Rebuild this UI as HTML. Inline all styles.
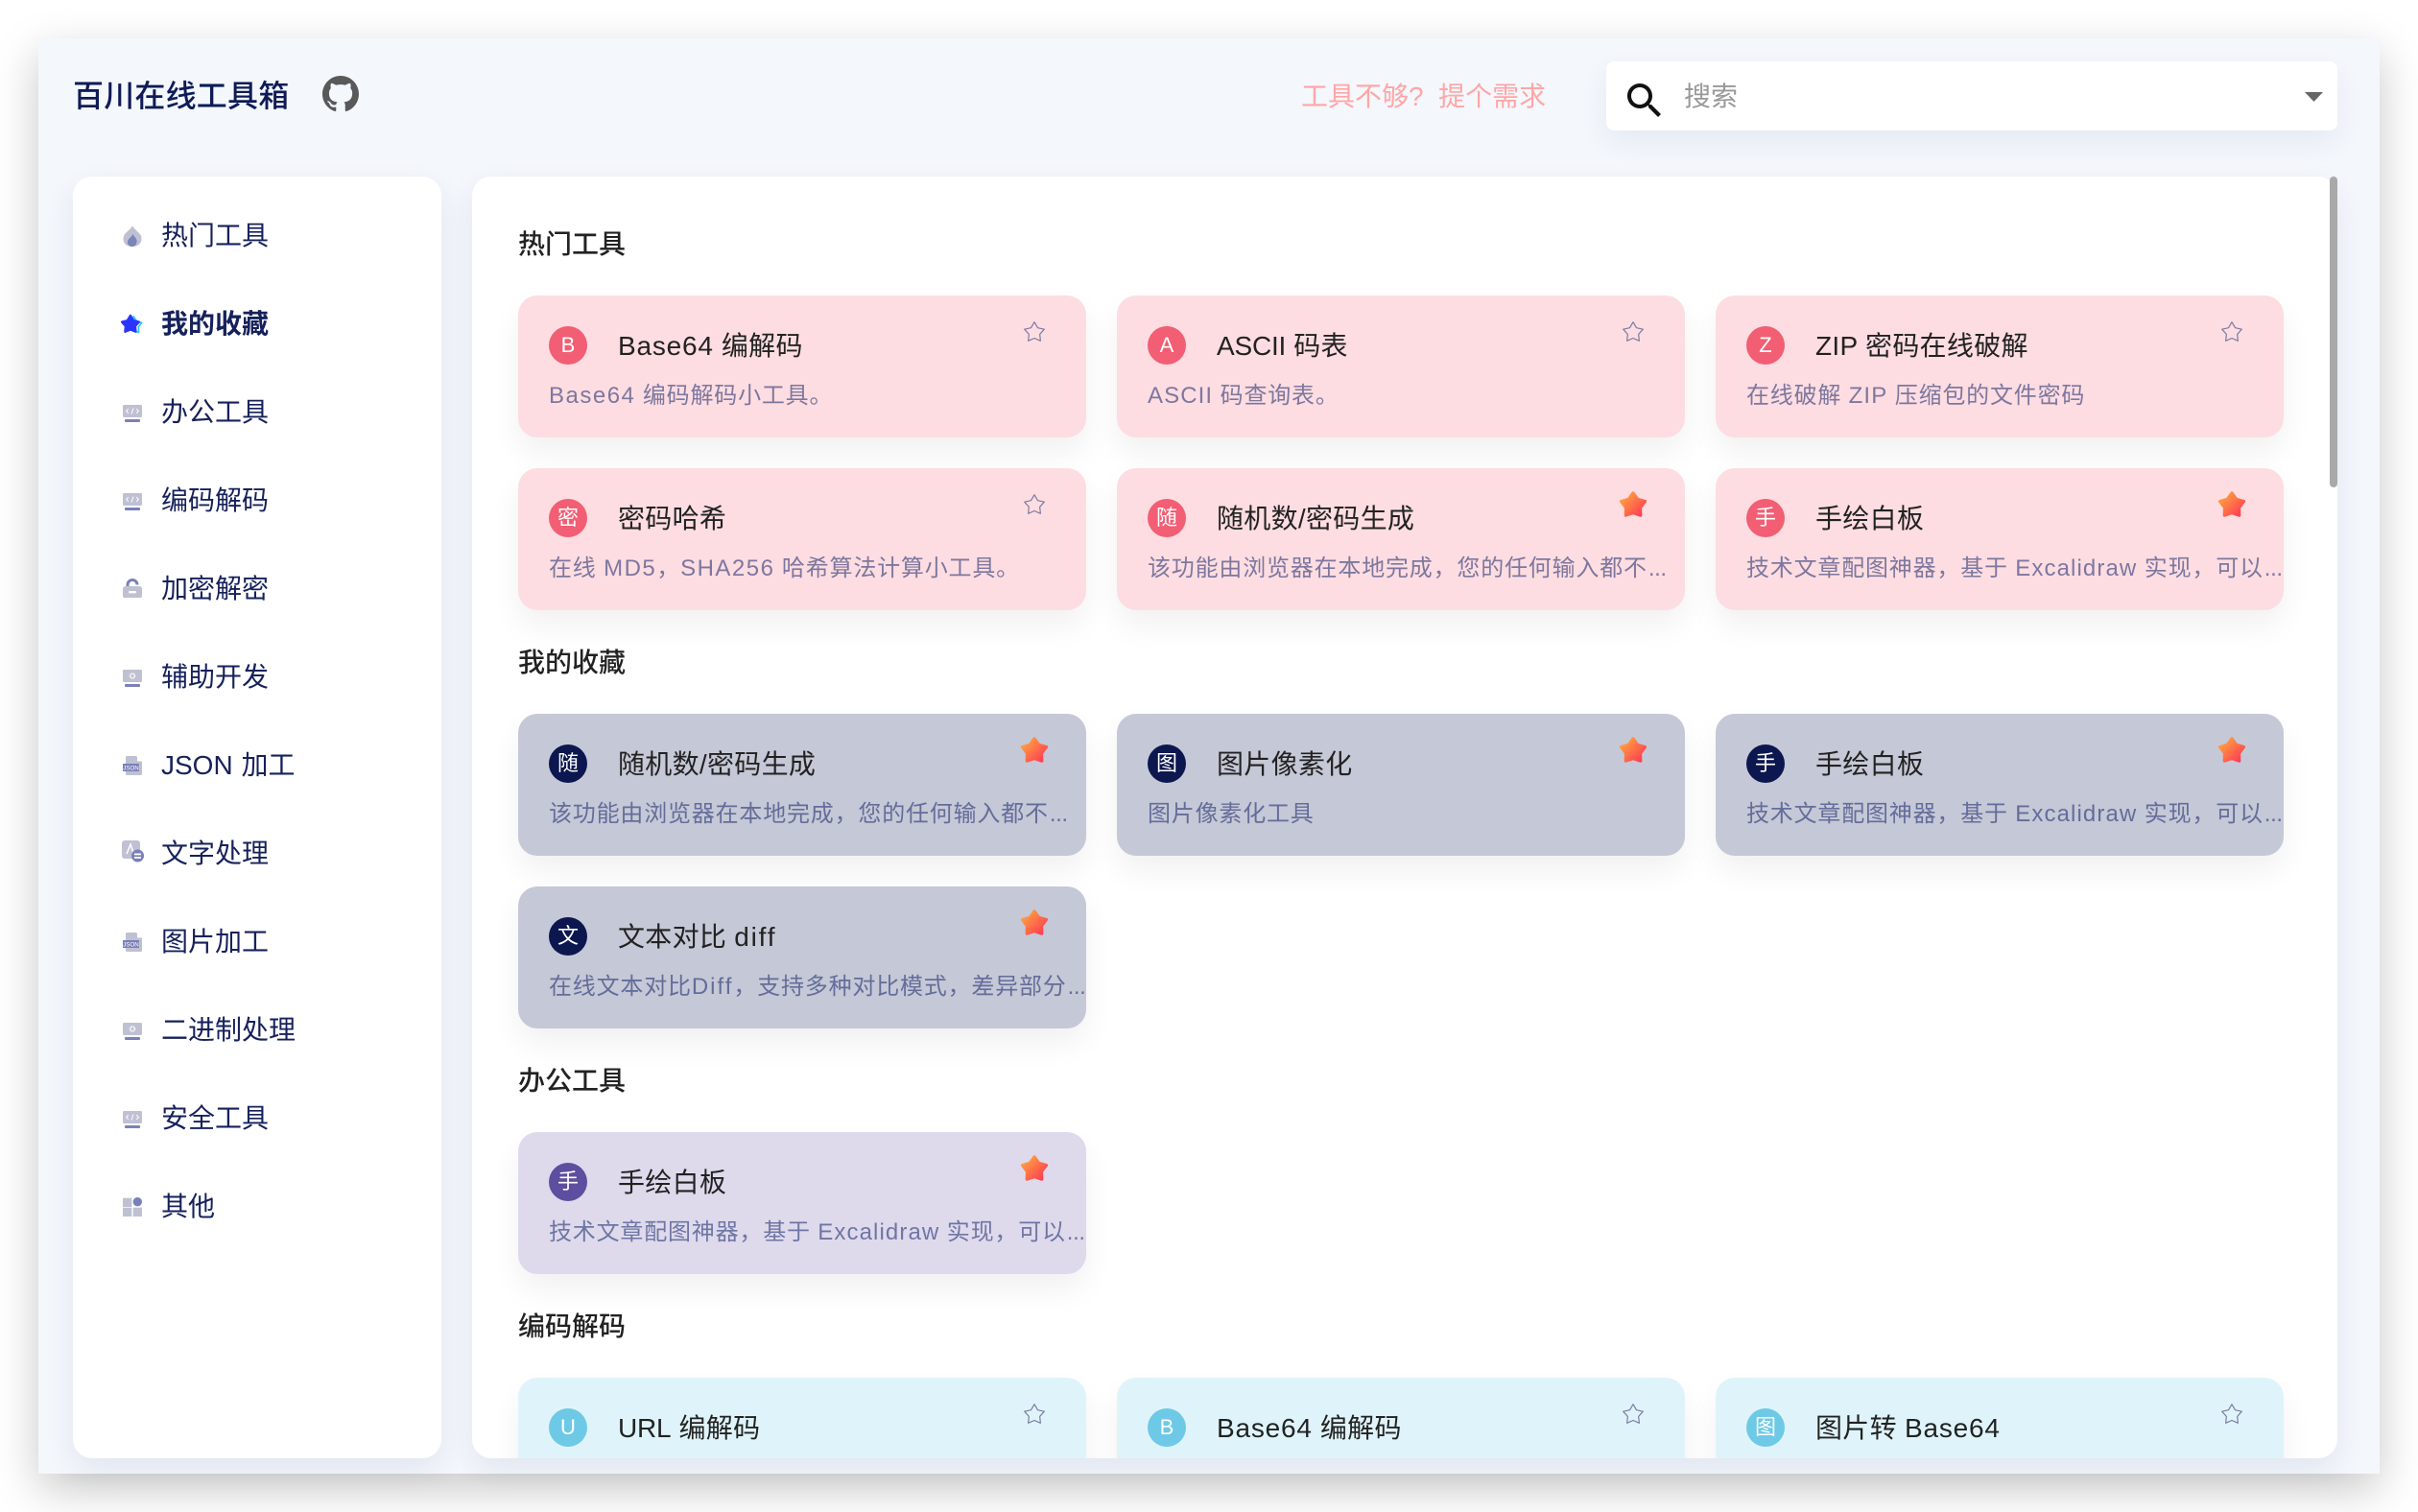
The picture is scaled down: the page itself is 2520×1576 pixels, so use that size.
<!DOCTYPE html>
<html lang="zh"><head><meta charset="utf-8"><title>百川在线工具箱</title>
<style>
*{box-sizing:border-box}
html,body{margin:0;padding:0;width:2520px;height:1576px;overflow:hidden;background:#fff;font-family:"Liberation Sans","Noto Sans CJK SC",sans-serif}
#win{position:absolute;left:40px;top:40px;width:2440px;height:1496px;background:#f4f7fc;box-shadow:0 16px 44px rgba(0,0,0,.22)}
.abs,.n,.i,.st,.h,.c{position:absolute}
#side{position:absolute;left:76px;top:184px;width:384px;height:1336px;background:#fff;border-radius:20px;box-shadow:0 12px 30px rgba(40,60,110,.09)}
#main{position:absolute;left:492px;top:184px;width:1944px;height:1336px;background:#fff;border-radius:20px;box-shadow:0 12px 30px rgba(40,60,110,.09)}
#clip{position:absolute;left:0;top:0;width:1944px;height:1336px;overflow:hidden;border-radius:20px}
.n{left:168px;height:40px;line-height:40px;font-size:28px;color:#16215b;white-space:nowrap;margin-top:-1px}
.i{left:128px;width:20px;height:20px}
.h{left:48px;height:40px;line-height:40px;font-size:28px;font-weight:500;color:#222;white-space:nowrap}
.c{width:592px;height:148px;border-radius:20px;box-shadow:0 16px 32px rgba(0,0,0,.06)}
.a{position:absolute;left:32px;top:32px;width:40px;height:40px;border-radius:50%;color:#fff;font-size:22px;line-height:40px;text-align:center}
.t{position:absolute;left:104px;top:33px;height:40px;line-height:40px;font-size:28px;color:#222;white-space:nowrap;letter-spacing:.3px}
.d{position:absolute;left:32px;top:85px;width:560px;height:40px;line-height:40px;font-size:24px;letter-spacing:.8px;color:rgba(20,35,105,.55);white-space:nowrap;overflow:hidden}
.d i{font-style:normal;letter-spacing:-.4px;margin-left:1px}
.st{left:525px;top:25px;width:26px;height:26px}
.f{left:521px;top:21px;width:34px;height:34px}
.p{background:#fddde1}.p .a{background:#f25e73}
.g{background:#c5c8d6}.g .a{background:#0c174f}
.v{background:#dedaec}.v .a{background:#5d4e9f}
.b{background:#dff4fa}.b .a{background:#6ec9e6}
.l1{letter-spacing:1.5px}.l2{letter-spacing:1.1px}.l3{letter-spacing:2px}.l4{letter-spacing:.8px}.l5{letter-spacing:1.8px}.l6{letter-spacing:-.2px}
</style></head><body>
<svg width="0" height="0" style="position:absolute"><defs>
<linearGradient id="gr" gradientUnits="userSpaceOnUse" x1="4" y1="5" x2="20" y2="21"><stop offset="0" stop-color="#ffa53f"/><stop offset="1" stop-color="#ff3355"/></linearGradient>
<symbol id="so" viewBox="0 0 24 24"><polygon points="12,2.5 15.23,8.05 21.51,9.41 17.23,14.2 17.88,20.59 12,18 6.12,20.59 6.77,14.2 2.49,9.41 8.77,8.05" fill="none" stroke="#7c7ba3" stroke-width="1.1" stroke-linejoin="round"/></symbol>
<symbol id="sf" viewBox="0 0 24 24"><polygon points="12,3.5 15.23,8.05 20.7,9.6 17.23,14.2 17.4,19.8 12,18 6.6,19.8 6.77,14.2 3.3,9.6 8.77,8.05" fill="url(#gr)" stroke="url(#gr)" stroke-width="2.4" stroke-linejoin="round"/></symbol>
<symbol id="code" viewBox="0 0 20 20"><rect x="0" y="2" width="20" height="13" rx="1.5" fill="#bfc1d3"/><rect x="2" y="17" width="16" height="3" rx="1" fill="#7a80b8"/><path d="M5.8 6.2L3.6 8.5l2.2 2.3M14.2 6.2l2.2 2.3-2.2 2.3M11 5.5L9 11.5" fill="none" stroke="#fff" stroke-width="1"/></symbol>
<symbol id="gear" viewBox="0 0 20 20"><rect x="0" y="2" width="20" height="13" rx="1.5" fill="#bfc1d3"/><rect x="2" y="17" width="16" height="3" rx="1" fill="#7a80b8"/><circle cx="10" cy="8.5" r="2.4" fill="none" stroke="#fff" stroke-width="1.6" stroke-dasharray="1.2 .5"/></symbol>
<symbol id="json" viewBox="0 0 20 20"><path d="M3 1.5Q3 0 4.5 0H14l6 6v12.5q0 1.5-1.5 1.5h-14Q3 20 3 18.5z" fill="#bfc1d3"/><path d="M15 0l5 5.5h-5z" fill="#fff"/><rect x="0" y="8" width="17" height="8" fill="#7a80b8"/><text x="8.5" y="14.5" font-size="6.2" fill="#fff" text-anchor="middle" font-family="Liberation Sans">JSON</text></symbol>
</defs></svg>
<div id="win"></div>

<div class="abs" style="left:76px;top:80px;height:40px;line-height:40px;font-size:32px;font-weight:500;color:#0f1b56;white-space:nowrap;letter-spacing:.2px">百川在线工具箱</div>
<svg class="abs" style="left:335.500px;top:79px" width="38" height="38" viewBox="0 0 16 16"><path fill="#595959" d="M8 0C3.58 0 0 3.58 0 8c0 3.54 2.29 6.53 5.47 7.59.4.07.55-.17.55-.38 0-.19-.01-.82-.01-1.49-2.01.37-2.53-.49-2.69-.94-.09-.23-.48-.94-.82-1.13-.28-.15-.68-.52-.01-.53.63-.01 1.08.58 1.23.82.72 1.21 1.87.87 2.33.66.07-.52.28-.87.51-1.07-1.78-.2-3.64-.89-3.64-3.95 0-.87.31-1.59.82-2.15-.08-.2-.36-1.02.08-2.12 0 0 .67-.21 2.2.82.64-.18 1.32-.27 2-.27.68 0 1.36.09 2 .27 1.53-1.04 2.2-.82 2.2-.82.44 1.1.16 1.92.08 2.12.51.56.82 1.27.82 2.15 0 3.07-1.87 3.75-3.65 3.95.29.25.54.73.54 1.48 0 1.07-.01 1.93-.01 2.2 0 .21.15.46.55.38A8.013 8.013 0 0016 8c0-4.42-3.58-8-8-8z"/></svg>
<div class="abs" style="left:1356px;top:81px;height:40px;line-height:40px;font-size:28px;color:#ffa6a6;white-space:nowrap">工具不够?&nbsp;&nbsp;<span style="margin-left:0">提个需求</span></div>

<div class="abs" style="left:1674px;top:64px;width:762px;height:72px;background:#fff;border-radius:8px;box-shadow:0 12px 30px rgba(40,60,110,.07)"></div>
<svg class="abs" style="left:1690px;top:81px" width="48" height="48" viewBox="0 0 24 24"><path fill="#111" d="M15.5 14h-.79l-.28-.27C15.41 12.59 16 11.11 16 9.5 16 5.91 13.09 3 9.5 3S3 5.91 3 9.5 5.91 16 9.5 16c1.61 0 3.09-.59 4.23-1.57l.27.28v.79l5 4.99L20.49 19l-4.99-5zm-6 0C7.01 14 5 11.99 5 9.5S7.01 5 9.5 5 14 7.01 14 9.5 11.99 14 9.5 14z"/></svg>
<div class="abs" style="left:1755px;top:81px;height:40px;line-height:40px;font-size:28px;color:#999;white-space:nowrap">搜索</div>
<svg class="abs" style="left:2401px;top:95px" width="21" height="12"><polygon points="1,1 20,1 10.5,11" fill="#666"/></svg>

<div id="side"></div>
<svg class="i" style="top:235px;height:22px" viewBox="0 0 20 20" preserveAspectRatio="none"><path d="M10 0c1 3 6 5.5 8.5 9 2.5 4.500.5 11-8.500 11S-1 14 1.500 9C4 5.500 9 3 10 0z" fill="#bfc1d3"/><path d="M10.500 8c.3 2 5 4.500 4 8-.5 2.500-2.500 4-5 4s-5-2-4.500-5c.5-2.500 4.500-4 5.500-7z" fill="#7a85bb"/></svg>
<div class="n" style="top:227px">热门工具</div>
<svg class="i" style="top:325px;left:124px;width:26px;height:26px" viewBox="0 0 24 24"><polygon points="14,4.500 17,9 21.800,10.500 18.800,14.500 19,19.800 14.500,18.500" fill="none" stroke="#33c6ff" stroke-width="1.600" stroke-linejoin="round"/><polygon points="11,3.800 13.800,8.500 19,9.800 15.500,13.800 16,19 11,17 6,19 6.500,13.800 3,9.800 8.200,8.500" fill="#2b35ff" stroke="#2b35ff" stroke-width="2.400" stroke-linejoin="round"/></svg>
<div class="n" style="top:319px;font-weight:700">我的收藏</div>
<svg class="i" style="top:420px"><use href="#code"/></svg><div class="n" style="top:411px">办公工具</div>
<svg class="i" style="top:512px"><use href="#code"/></svg><div class="n" style="top:503px">编码解码</div>
<svg class="i" style="top:603px" viewBox="0 0 20 20"><path d="M3.500 8V6.500a6.500 6.500 0 0 1 13 0H13.500a3.500 3.500 0 0 0-7 0V8z" fill="#7a80b8"/><rect y="8" width="20" height="13" rx="3" fill="#bfc1d3"/><rect x="6" y="13" width="8" height="2.400" rx="1" fill="#fff"/></svg>
<div class="n" style="top:595px">加密解密</div>
<svg class="i" style="top:696px"><use href="#gear"/></svg><div class="n" style="top:687px">辅助开发</div>
<svg class="i" style="top:788px"><use href="#json"/></svg><div class="n" style="top:779px">JSON<span style="margin-left:1px"> </span>加工</div>
<svg class="i" style="top:876px;left:127px;width:23px;height:23px" viewBox="0 0 23 23"><rect y="0" width="19" height="19" rx="3" fill="#bfc1d3"/><path d="M5 14L9 4l3 9" fill="none" stroke="#fff" stroke-width="1.500"/><circle cx="16.500" cy="16" r="6.500" fill="#7a80b8"/><rect x="13" y="13.500" width="7" height="1.800" fill="#fff"/><rect x="13" y="17" width="7" height="1.800" fill="#fff"/></svg>
<div class="n" style="top:871px">文字处理</div>
<svg class="i" style="top:972px"><use href="#json"/></svg><div class="n" style="top:963px">图片加工</div>
<svg class="i" style="top:1064px"><use href="#gear"/></svg><div class="n" style="top:1055px">二进制处理</div>
<svg class="i" style="top:1156px"><use href="#code"/></svg><div class="n" style="top:1147px">安全工具</div>
<svg class="i" style="top:1248px" viewBox="0 0 20 20"><rect width="9.300" height="9.300" y=".7" fill="#bfc1d3"/><rect y="10.700" width="9.300" height="9.300" fill="#bfc1d3"/><rect x="10.700" y="10.700" width="9.300" height="9.300" fill="#bfc1d3"/><circle cx="15.300" cy="4.700" r="4.700" fill="#7a80b8"/></svg>
<div class="n" style="top:1239px">其他</div>

<div id="main"><div id="clip">
<div class="h" style="top:51px">热门工具</div>
<div class="c p" style="left:48px;top:124px"><div class="a">B</div><div class="t"><span class="l4">Base64</span> 编解码</div><div class="d"><span class="l1">Base64</span> 编码解码小工具。</div><svg class="st"><use href="#so"/></svg></div>
<div class="c p" style="left:672px;top:124px"><div class="a">A</div><div class="t"><span class="l6">ASCII</span> 码表</div><div class="d"><span class="l2">ASCII</span> 码查询表。</div><svg class="st"><use href="#so"/></svg></div>
<div class="c p" style="left:1296px;top:124px"><div class="a">Z</div><div class="t">ZIP 密码在线破解</div><div class="d">在线破解 <span class="l2">ZIP</span> 压缩包的文件密码</div><svg class="st"><use href="#so"/></svg></div>
<div class="c p" style="left:48px;top:304px"><div class="a">密</div><div class="t">密码哈希</div><div class="d">在线 <span class="l1">MD5</span>，<span class="l1">SHA256</span> 哈希算法计算小工具。</div><svg class="st"><use href="#so"/></svg></div>
<div class="c p" style="left:672px;top:304px"><div class="a">随</div><div class="t">随机数/密码生成</div><div class="d">该功能由浏览器在本地完成，您的任何输入都不<i>...</i></div><svg class="st f"><use href="#sf"/></svg></div>
<div class="c p" style="left:1296px;top:304px"><div class="a">手</div><div class="t">手绘白板</div><div class="d">技术文章配图神器，基于 <span class="l2">Excalidraw</span> 实现，可以<i>...</i></div><svg class="st f"><use href="#sf"/></svg></div>

<div class="h" style="top:487px">我的收藏</div>
<div class="c g" style="left:48px;top:560px"><div class="a">随</div><div class="t">随机数/密码生成</div><div class="d">该功能由浏览器在本地完成，您的任何输入都不<i>...</i></div><svg class="st f"><use href="#sf"/></svg></div>
<div class="c g" style="left:672px;top:560px"><div class="a">图</div><div class="t">图片像素化</div><div class="d">图片像素化工具</div><svg class="st f"><use href="#sf"/></svg></div>
<div class="c g" style="left:1296px;top:560px"><div class="a">手</div><div class="t">手绘白板</div><div class="d">技术文章配图神器，基于 <span class="l2">Excalidraw</span> 实现，可以<i>...</i></div><svg class="st f"><use href="#sf"/></svg></div>
<div class="c g" style="left:48px;top:740px"><div class="a">文</div><div class="t">文本对比 <span class="l5">diff</span></div><div class="d">在线文本对比<span class="l3">Diff</span>，支持多种对比模式，差异部分<i>...</i></div><svg class="st f"><use href="#sf"/></svg></div>

<div class="h" style="top:923px">办公工具</div>
<div class="c v" style="left:48px;top:996px"><div class="a">手</div><div class="t">手绘白板</div><div class="d">技术文章配图神器，基于 <span class="l2">Excalidraw</span> 实现，可以<i>...</i></div><svg class="st f"><use href="#sf"/></svg></div>

<div class="h" style="top:1179px">编码解码</div>
<div class="c b" style="left:48px;top:1252px"><div class="a">U</div><div class="t"><span class="l6">URL</span> 编解码</div><div class="d">URL 编码解码小工具。</div><svg class="st"><use href="#so"/></svg></div>
<div class="c b" style="left:672px;top:1252px"><div class="a">B</div><div class="t"><span class="l4">Base64</span> 编解码</div><div class="d"><span class="l1">Base64</span> 编码解码小工具。</div><svg class="st"><use href="#so"/></svg></div>
<div class="c b" style="left:1296px;top:1252px"><div class="a">图</div><div class="t">图片转 <span class="l4">Base64</span></div><div class="d">图片转 <span class="l1">Base64</span> 小工具。</div><svg class="st"><use href="#so"/></svg></div>
</div>
<div class="abs" style="left:1936px;top:0;width:8px;height:324px;background:#a9a9a9;border-radius:4px"></div>
</div>
</body></html>
